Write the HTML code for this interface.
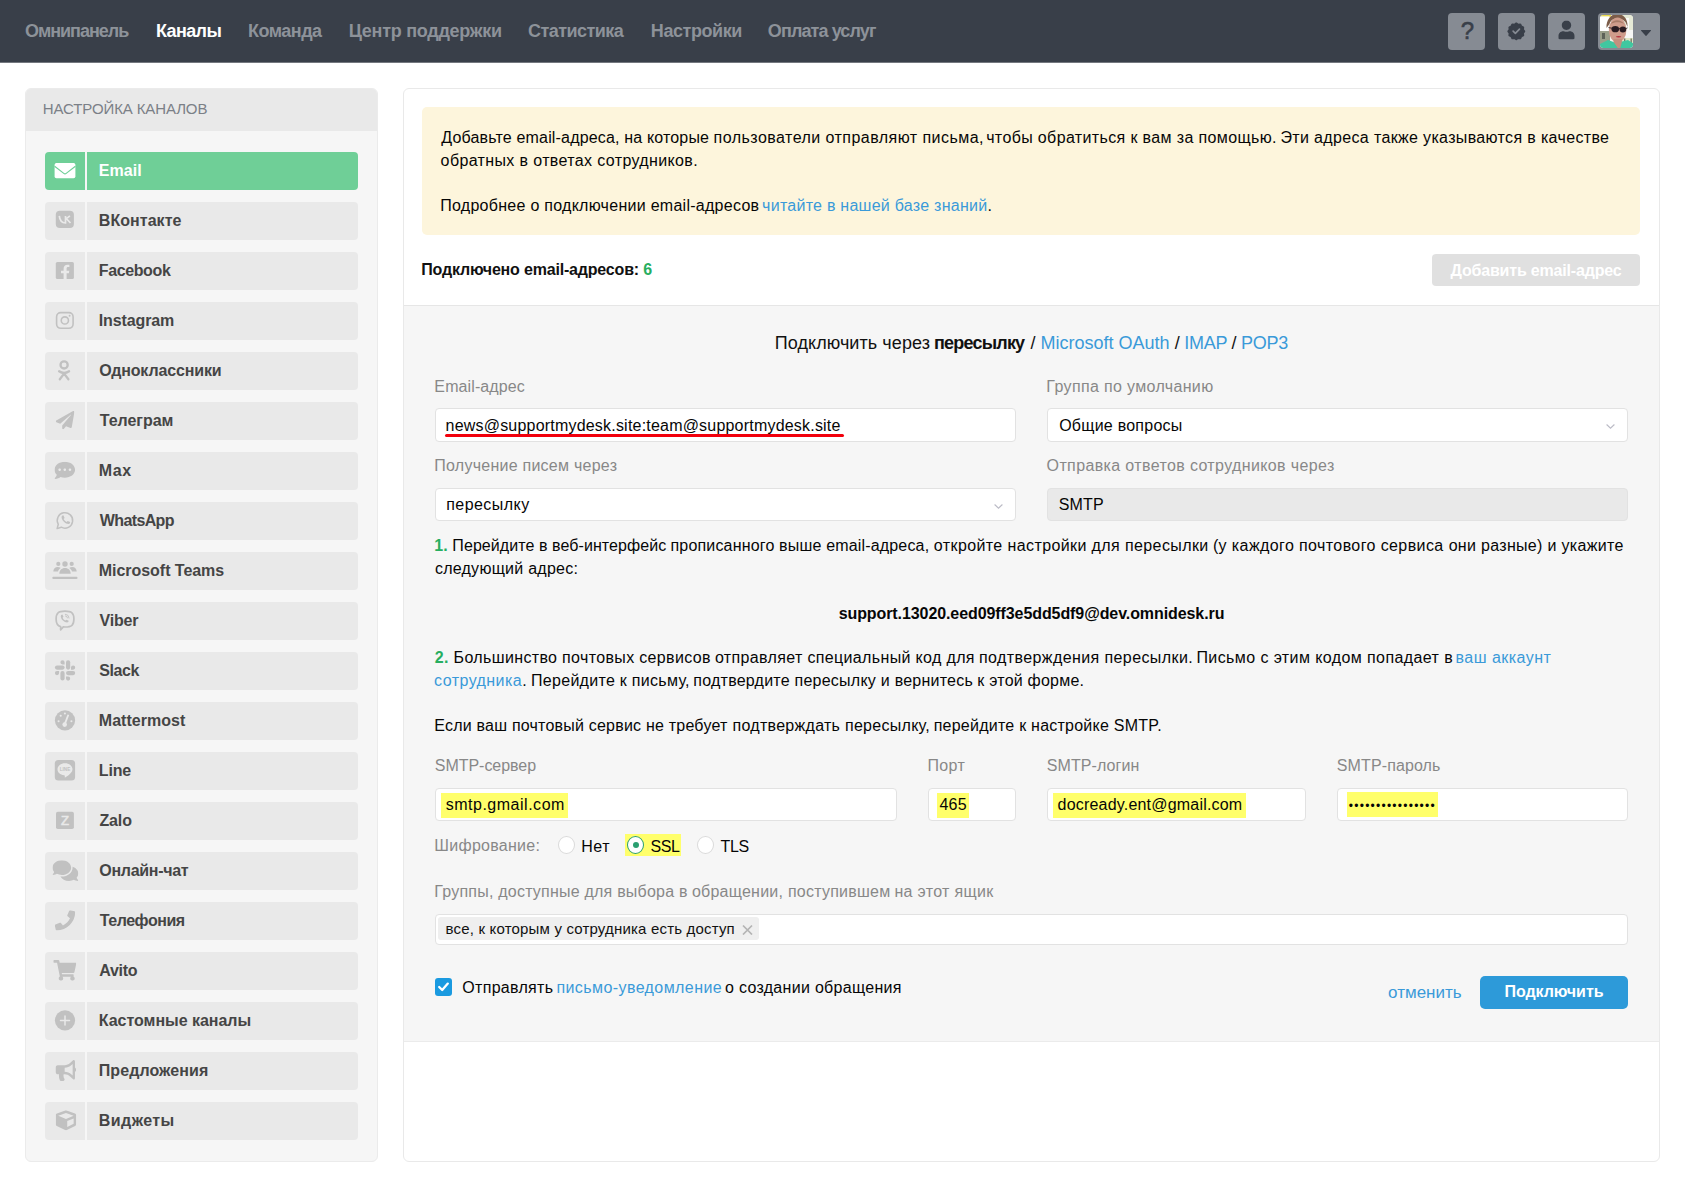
<!DOCTYPE html>
<html lang="ru">
<head>
<meta charset="utf-8">
<title>Каналы — Email</title>
<style>
*{box-sizing:border-box;margin:0;padding:0}
html,body{width:1685px;height:1187px;overflow:hidden;background:#fff}
body{font-family:"Liberation Sans",sans-serif;font-size:16px;color:#060606;position:relative;letter-spacing:-0.3px}
a{color:#3a9ad9;text-decoration:none}
ul{list-style:none}
.abs{position:absolute;white-space:nowrap}

/* ---------- top bar ---------- */
#top{position:absolute;left:0;top:0;width:1685px;height:62px;background:#393f49;box-shadow:0 1px 0 rgba(57,63,73,.7)}
#top nav a{position:absolute;top:20px;font-size:18px;line-height:22px;font-weight:bold;color:#8d9299;white-space:nowrap}
#top nav a.on{color:#fff}
.tb{position:absolute;top:13px;width:37px;height:37px;border-radius:4px;background:#868b93}
.tb svg{position:absolute}
.qm{position:absolute;left:1px;top:0;width:37px;text-align:center;font-size:24px;line-height:36px;color:#393f49;letter-spacing:0;-webkit-text-stroke:.55px #393f49}

/* ---------- sidebar ---------- */
#side{position:absolute;left:25px;top:88px;width:353px;height:1074px;background:#f6f6f6;border:1px solid #ebebeb;border-radius:6px;overflow:hidden}
#side h2{position:absolute;left:-1px;top:-1px;width:353px;height:43px;background:#e9e9e9;font-size:15px;font-weight:normal;color:#7b8087;line-height:41px;padding-left:19px;letter-spacing:-0.35px}
.ch{position:absolute;left:19px;width:313px;height:38px}
.ch .ic{position:absolute;left:0;top:0;width:40px;height:38px;background:#e9e9e9;border-radius:4px 0 0 4px}
.ch .nm{position:absolute;left:42px;top:0;width:271px;height:38px;background:#e9e9e9;border-radius:0 4px 4px 0;font-weight:bold;font-size:16px;line-height:37px;padding-left:13px;color:#454545;letter-spacing:-0.45px;white-space:nowrap}
.ch.active .ic,.ch.active .nm{background:#6fcf97;color:#fff}
.ch .ic svg{position:absolute;left:0;top:0}

/* ---------- main ---------- */
#main{position:absolute;left:403px;top:88px;width:1257px;height:1074px;background:#fff;border:1px solid #e9e9e9;border-radius:6px;overflow:hidden}
#main>*{position:absolute}
#note{left:18px;top:18px;width:1218px;height:128px;background:#fdf5dc;border-radius:5px}
#note p{position:absolute;left:19px;font-size:16px;line-height:23px;white-space:nowrap;color:#060606}
#cnt{left:18px;top:170px;font-size:16px;font-weight:bold;line-height:22px;color:#111;white-space:nowrap;letter-spacing:-0.45px}
#cnt b{color:#27ae60}
#add{left:1028px;top:165px;width:208px;height:32px;border-radius:4px;background:#e0e0e0;color:#fff;font-weight:bold;font-size:16px;line-height:34px;text-align:center}
#form{left:0;top:216px;width:1255px;height:737px;background:#f6f6f6;border-top:1px solid #e6e6e6;border-bottom:1px solid #ebebeb}
#form>*{position:absolute;white-space:nowrap;margin-top:-1px}
.ttl{left:0;width:1255px;top:26px;text-align:center;font-size:18px;line-height:24px;color:#111;letter-spacing:-0.5px}
.lb{font-size:16px;line-height:22px;color:#888;margin-top:0!important}
.in{height:33px;background:#fff;border:1px solid #e2e2e2;border-radius:4px;font-size:16px;line-height:32px;padding-left:11px;color:#060606;overflow:hidden}
.in.dis{background:#e9e9e9;border-color:#e2e2e2}
.hl{background:#ffff6b}
.p{font-size:16px;line-height:23px;color:#060606}
.g{color:#27ae60;font-weight:bold}
.chev{position:absolute;right:12.500px;top:14.500px}

.ctr{text-align:center}
.err{position:relative;display:inline-block}
.err:after{content:"";position:absolute;left:-1px;right:-3px;top:25px;height:3px;border-radius:2px;background:#f2000c}
.in .hl{position:absolute;top:4px;height:25px}
.in span{position:relative}
.rd{position:absolute;width:17px;height:18px;margin-top:-2px!important;border-radius:50%;background:#fff;border:1px solid #dadada}
.rd.on{border-color:#2a9f70}
.rd.on:after{content:"";position:absolute;left:4.5px;top:5px;width:6px;height:6px;border-radius:50%;background:#2a9f70}
.rl{font-size:16px;line-height:22px;color:#060606;margin-top:0!important}
.tags{padding-left:2px}
.tag{position:absolute!important;left:2px;top:2px;height:23px;width:321px;background:#efefef;border-radius:3px;font-size:15px;line-height:24px;padding-left:8px;color:#111}
.tag svg{position:absolute;right:6.500px;top:7px}
.cb{position:absolute;width:17px;height:18px;border-radius:3px;background:#1a9ae0}
.cb svg{position:absolute;left:0;top:0}
#go{left:1076px;top:671px;width:148px;height:33px;border-radius:5px;background:#2d9ad9;color:#fff;font-weight:bold;font-size:16px;line-height:32px;text-align:center}
.pw{font-size:12px;letter-spacing:0}
</style>
<style>
#n0{letter-spacing:-1.036px;margin-left:-0.01px}
#n1{letter-spacing:-0.599px;margin-left:-0.14px}
#n2{letter-spacing:-0.484px;margin-left:-0.14px}
#n3{letter-spacing:-0.269px;margin-left:-0.27px}
#n4{letter-spacing:-0.560px;margin-left:0.07px}
#n5{letter-spacing:-0.423px;margin-left:-0.18px}
#n6{letter-spacing:-0.899px;margin-left:-0.16px}
#sh{letter-spacing:-0.116px;margin-left:-1.19px}
#nt2{letter-spacing:0.369px;margin-left:-0.40px}
#cnt{letter-spacing:-0.185px;margin-left:-0.74px}
#addtx{letter-spacing:-0.179px}
#l1{letter-spacing:0.110px;margin-left:-0.65px}
#l2{letter-spacing:0.348px;margin-left:-0.65px}
#l3{letter-spacing:0.253px;margin-left:-0.76px}
#l4{letter-spacing:0.372px;margin-left:-0.41px}
#v1{letter-spacing:0.203px;margin-left:-1.48px}
#v2{letter-spacing:0.246px;margin-left:0.14px}
#v3{letter-spacing:0.442px;margin-left:-0.77px}
#v4{letter-spacing:0.183px;margin-left:-0.31px}
#p2{letter-spacing:0.257px;margin-left:-0.13px}
#p3{letter-spacing:-0.086px}
#l5{letter-spacing:-0.042px;margin-left:-0.20px}
#l6{letter-spacing:0.402px;margin-left:-0.62px}
#l7{letter-spacing:0.075px;margin-left:-0.20px}
#l8{letter-spacing:0.104px;margin-left:-0.17px}
#v5{letter-spacing:0.516px;margin-left:-1.37px}
#v6{letter-spacing:0.232px;margin-left:-0.57px}
#v7{letter-spacing:0.196px;margin-left:-1.44px}
#v8{letter-spacing:1.242px;margin-left:-0.18px}
#l9{letter-spacing:0.265px;margin-left:-0.65px}
#r1{letter-spacing:0.537px;margin-left:0.29px}
#r2{letter-spacing:-0.355px;margin-left:0.40px}
#r3{letter-spacing:-0.355px;margin-left:0.51px}
#tg{letter-spacing:0.182px;margin-left:-0.46px}
#cancel{letter-spacing:0.017px;margin-left:0.05px}
#gotx{letter-spacing:-0.040px}
#nt1a{letter-spacing:0.166px;margin-left:0.35px}
#nt1b{letter-spacing:0.456px;margin-left:-0.20px}
#nt1c{letter-spacing:0.365px;margin-left:-2.66px}
#nt1d{letter-spacing:0.347px;margin-left:-1.17px}
#nt3a{letter-spacing:0.272px;margin-left:-0.77px}
#nt3b{letter-spacing:0.257px;margin-left:-1.96px}
#ttla{letter-spacing:0.081px;margin-left:-0.24px}
#ttlb{letter-spacing:-0.781px;margin-left:-1.28px}
#ttlc{letter-spacing:-0.009px;margin-left:1.75px}
#ttld{letter-spacing:-0.254px;margin-left:0.15px}
#p1a{letter-spacing:0.073px;margin-left:-0.68px}
#p1b{letter-spacing:0.170px;margin-left:-0.28px}
#p1c{letter-spacing:0.393px;margin-left:-0.06px}
#p1d{letter-spacing:0.397px;margin-left:-0.59px}
#p1e{letter-spacing:0.311px;margin-left:0.24px}
#p4a{letter-spacing:0.347px;margin-left:-0.23px}
#p4b{letter-spacing:0.351px;margin-left:-0.71px}
#p4c{letter-spacing:0.407px;margin-left:-0.73px}
#p4d{letter-spacing:0.404px;margin-left:-1.56px}
#p4e{letter-spacing:0.468px;margin-left:-2.34px}
#p5a{letter-spacing:0.442px;margin-left:-0.92px}
#p5b{letter-spacing:0.288px;margin-left:-0.89px}
#p5c{letter-spacing:0.239px;margin-left:-1.26px}
#p5d{letter-spacing:0.217px;margin-left:-0.40px}
#p6a{letter-spacing:0.212px;margin-left:-0.71px}
#p6b{letter-spacing:0.285px;margin-left:0.37px}
#p6c{letter-spacing:0.241px;margin-left:-1.12px}
#l10a{letter-spacing:0.214px;margin-left:-0.65px}
#l10b{letter-spacing:0.238px;margin-left:-0.40px}
#l10c{letter-spacing:0.320px;margin-left:-0.65px}
#cka{letter-spacing:0.298px;margin-left:0.31px}
#ckb{letter-spacing:0.421px;margin-left:-1.70px}
#ckc{letter-spacing:0.295px;margin-left:-1.25px}
#c0{letter-spacing:0.068px;margin-left:-1.27px}
#c1{letter-spacing:0.052px;margin-left:-1.23px}
#c2{letter-spacing:-0.383px;margin-left:-1.23px}
#c3{letter-spacing:-0.115px;margin-left:-1.23px}
#c4{letter-spacing:-0.139px;margin-left:-0.78px}
#c5{letter-spacing:-0.025px;margin-left:-0.28px}
#c6{letter-spacing:0.605px;margin-left:-1.23px}
#c7{letter-spacing:-0.626px;margin-left:-0.23px}
#c8{letter-spacing:-0.039px;margin-left:-1.23px}
#c9{letter-spacing:-0.220px;margin-left:-0.40px}
#c10{letter-spacing:-0.389px;margin-left:-0.74px}
#c11{letter-spacing:0.034px;margin-left:-1.23px}
#c12{letter-spacing:-0.145px;margin-left:-1.23px}
#c13{letter-spacing:-0.126px;margin-left:-0.57px}
#c14{letter-spacing:-0.286px;margin-left:-0.78px}
#c15{letter-spacing:-0.468px;margin-left:-0.28px}
#c16{letter-spacing:-0.330px;margin-left:-0.66px}
#c17{letter-spacing:-0.025px;margin-left:-1.23px}
#c18{letter-spacing:0.082px;margin-left:-1.23px}
#c19{letter-spacing:0.434px;margin-left:-1.23px}
</style>
</head>
<body>

<header id="top">
  <nav>
    <a id="n0" style="left:25px">Омнипанель</a>
    <a id="n1" class="on" style="left:156px">Каналы</a>
    <a id="n2" style="left:248px">Команда</a>
    <a id="n3" style="left:349px">Центр поддержки</a>
    <a id="n4" style="left:528px">Статистика</a>
    <a id="n5" style="left:651px">Настройки</a>
    <a id="n6" style="left:768px">Оплата услуг</a>
  </nav>
  <div class="tb" style="left:1448px"><span class="qm">?</span></div>
  <div class="tb" style="left:1498px"><svg width="37" height="37" viewBox="0 0 37 37" style="left:0;top:0"><g transform="translate(18.300 18) scale(.86) translate(-18.500 -18.500)"><path fill="#393f49" d="M18.500 9.700l2.100 1.500 2.500-.3 1.100 2.300 2.300 1.100-.3 2.500 1.500 2.100-1.500 2.100.3 2.500-2.300 1.100-1.100 2.300-2.500-.3-2.100 1.500-2.100-1.500-2.500.3-1.100-2.300-2.300-1.100.3-2.500-1.500-2.100 1.500-2.100-.3-2.500 2.300-1.100 1.100-2.300 2.500.3z" stroke="#393f49" stroke-width="2.400" stroke-linejoin="round"/><path d="M14.800 18.700l2.600 2.600 4.800-5" fill="none" stroke="#868b93" stroke-width="1.900" stroke-linecap="round" stroke-linejoin="round"/></g></svg></div>
  <div class="tb" style="left:1548px"><svg width="37" height="37" viewBox="0 0 37 37" style="left:0;top:0"><svg x="10.3" y="7.6" width="16.4" height="18.8" viewBox="0 0 448 512" preserveAspectRatio="none"><path fill="#393f49" d="M224 256c70.700 0 128-57.300 128-128S294.700 0 224 0 96 57.300 96 128s57.300 128 128 128zm89.600 32h-16.700c-22.200 10.200-46.900 16-72.900 16s-50.600-5.800-72.900-16h-16.700C60.200 288 0 348.200 0 422.400V464c0 26.500 21.500 48 48 48h352c26.500 0 48-21.500 48-48v-41.600c0-74.200-60.200-134.400-134.400-134.400z"/></svg></svg></div>
  <div class="tb" style="left:1598px;width:62px"><svg width="33" height="33" viewBox="0 0 33 33" style="left:2px;top:2px;border-radius:3px"><defs><filter id="bl" x="-10%" y="-10%" width="120%" height="120%"><feGaussianBlur stdDeviation=".55"/></filter><clipPath id="ac"><rect width="33" height="33" rx="3"/></clipPath></defs><g clip-path="url(#ac)"><rect width="33" height="33" fill="#f3f4ee"/><g filter="url(#bl)"><rect x="-1" y="-1" width="12" height="2.600" fill="#e9d84a"/><rect x="-1" y="1.500" width="10" height="15" fill="#ffffff"/><rect x="-1" y="16" width="11" height="15" fill="#9a9f8a"/><rect x="2" y="18" width="3" height="6" fill="#5d6258"/><rect x="22" y="0" width="12" height="16" fill="#e6ead6"/><rect x="26" y="3" width="3" height="12" fill="#fbfbf8"/><rect x="22" y="15" width="12" height="9" fill="#f7f7f5"/><rect x="22" y="23" width="12" height="7" fill="#dfe6c4"/><rect x="24.200" y="23.500" width="1.100" height="6" fill="#5a5a50"/><rect x="30.600" y="23.500" width="1.100" height="7" fill="#5a5a50"/><path d="M6.500 13C6 5 11 -1 17 -1s11 4 10.500 13l-2-5C23 4 20 3.500 17 3.500S10.500 5 9.500 9z" fill="#7b5c49"/><ellipse cx="17.600" cy="15" rx="8.800" ry="12.500" fill="#cf9c8b"/><path d="M11 9c2-5 10-5 13 0-3-2.500-10-2.500-13 0z" fill="#a87c68"/><rect x="13.500" y="24" width="8.500" height="10" fill="#c38f7e"/><ellipse cx="15.300" cy="14.200" rx="3.800" ry="3.100" fill="#2a1f23"/><ellipse cx="22.900" cy="14.500" rx="3.300" ry="2.900" fill="#2a1f23"/><path d="M8.500 12.600l4 .7M18.800 13.400h1.200M26 13.500l1.500-.6" stroke="#2a1f23" stroke-width=".9" fill="none"/><ellipse cx="18.600" cy="21.700" rx="2.700" ry=".8" fill="#b5343f"/><path d="M-1 29.500l9-4.500 5.500 2 5 7H-1zM20 34l2-7.500 6-1.500 6 4v5z" fill="#3fc7a0"/></g></g></svg><svg width="10" height="6" viewBox="0 0 10 6" style="left:43px;top:17px"><path d="M.4 0h9.200a.4.400 0 0 1 .3.700L5.400 5.800a.6.600 0 0 1-.8 0L.1.700A.4.400 0 0 1 .4 0z" fill="#393f49"/></svg></div>
</header>

<aside id="side">
  <h2><span id="sh">НАСТРОЙКА КАНАЛОВ</span></h2>
  <ul>
<li class="ch active" style="top:63px"><span class="ic"><svg width="40" height="38" viewBox="0 0 40 38" style="left:0;top:0;transform:none"><rect x="9.600" y="11" width="20.800" height="15.200" rx="1.800" fill="#fff"/><path d="M9.600 14.300l9.200 7.100a2 2 0 0 0 2.400 0l9.200-7.100" fill="none" stroke="#6fcf97" stroke-width="1.150"/></svg></span><span class="nm"><span id="c0">Email</span></span></li>
<li class="ch" style="top:113px"><span class="ic"><svg width="40" height="38" viewBox="0 0 40 38" style="left:0;top:0;transform:none"><rect x="10.8" y="8.7" width="18.1" height="17.3" rx="4" fill="#c1c1c1"/><path d="M14.3 13.9c.4 4.300 2.400 7 6.200 7.100V13.900M20.500 17.300l4.400-3.400M21.700 17l3.800 4" fill="none" stroke="#e9e9e9" stroke-width="1.700"/></svg></span><span class="nm"><span id="c1">ВКонтакте</span></span></li>
<li class="ch" style="top:163px"><span class="ic"><svg width="40" height="38" viewBox="0 0 40 38" style="left:0;top:0;transform:none"><rect x="10.800" y="10" width="18.100" height="17" rx="1.600" fill="#c1c1c1"/><path fill="#e9e9e9" d="M18.600 27V21.300H16V18.700H18.600V16.700C18.600 14.100 20.100 12.700 22.500 12.700C23.400 12.700 24.400 12.850 24.400 12.850V15.100H23.200C22 15.100 21.600 15.800 21.600 16.600V18.700H24.300L23.900 21.300H21.600V27Z"/></svg></span><span class="nm"><span id="c2">Facebook</span></span></li>
<li class="ch" style="top:213px"><span class="ic"><svg width="40" height="38" viewBox="0 0 40 38" style="left:0;top:0;transform:none"><rect x="11.600" y="10.600" width="16.500" height="15.700" rx="4.200" fill="none" stroke="#c1c1c1" stroke-width="1.600"/><circle cx="19.850" cy="18.450" r="3.600" fill="none" stroke="#c1c1c1" stroke-width="1.600"/><circle cx="24.600" cy="13.800" r=".95" fill="#c1c1c1"/></svg></span><span class="nm"><span id="c3">Instagram</span></span></li>
<li class="ch" style="top:263px"><span class="ic"><svg width="40" height="38" viewBox="0 0 40 38" style="left:0;top:0;transform:none"><g fill="none" stroke="#c1c1c1" stroke-width="2.300" stroke-linecap="round"><circle cx="19.100" cy="12.900" r="3.600"/><path d="M14.100 19.300q5 3.400 10 0M19.100 21.600l-4.300 5.700M19.100 21.600l4.300 5.700"/></g></svg></span><span class="nm"><span id="c4">Одноклассники</span></span></li>
<li class="ch" style="top:313px"><span class="ic"><svg width="40" height="38" viewBox="0 0 40 38" style="left:0;top:0;transform:none"><svg x="10.8" y="9" width="18.6" height="18.2" viewBox="0 0 512 512" preserveAspectRatio="none"><path fill="#c1c1c1" d="M476 3.2L12.5 270.6c-18.1 10.4-15.8 35.600 2.200 43.200L121 358.400l287.300-253.200c5.500-4.900 13.300 2.600 8.600 8.300L176 407v80.500c0 23.600 28.500 32.900 42.500 15.800L282 426l124.600 52.200c14.200 6 30.400-2.900 33-18.200l72-432C515 7.800 493.300-6.800 476 3.200z"/></svg></svg></span><span class="nm"><span id="c5">Телеграм</span></span></li>
<li class="ch" style="top:363px"><span class="ic"><svg width="40" height="38" viewBox="0 0 40 38" style="left:0;top:0;transform:none"><svg x="9.5" y="9.8" width="20.6" height="17.2" viewBox="0 32 512 448" preserveAspectRatio="none"><path fill="#c1c1c1" d="M256 32C114.600 32 0 125.100 0 240c0 49.600 21.400 95 57 130.700C44.500 421.100 2.700 466 2.200 466.500c-2.200 2.300-2.800 5.700-1.500 8.700S4.800 480 8 480c66.300 0 116-31.800 140.600-51.400 32.700 12.300 69 19.400 107.400 19.400 141.400 0 256-93.100 256-208S397.400 32 256 32zM128 272c-17.700 0-32-14.300-32-32s14.300-32 32-32 32 14.300 32 32-14.300 32-32 32zm128 0c-17.700 0-32-14.300-32-32s14.300-32 32-32 32 14.300 32 32-14.300 32-32 32zm128 0c-17.700 0-32-14.300-32-32s14.300-32 32-32 32 14.300 32 32-14.300 32-32 32z"/></svg></svg></span><span class="nm"><span id="c6">Max</span></span></li>
<li class="ch" style="top:413px"><span class="ic"><svg width="40" height="38" viewBox="0 0 40 38" style="left:0;top:0;transform:none"><path d="M12.100 26.600l1.200-4.300a7.700 7.700 0 1 1 3 2.900z" fill="none" stroke="#c1c1c1" stroke-width="1.500" stroke-linejoin="round"/><path d="M17 13.700l1.400-.4 1.200 2.600-1 1.100c.6 1.300 1.600 2.300 3 3l1.100-1.100 2.500 1.200-.4 1.500c-1.200 1-3.900.2-5.900-1.800s-3-4.700-1.900-6.100z" fill="#c1c1c1"/></svg></span><span class="nm"><span id="c7">WhatsApp</span></span></li>
<li class="ch" style="top:463px"><span class="ic"><svg width="40" height="38" viewBox="0 0 40 38" style="left:0;top:0;transform:none"><g fill="#c1c1c1"><circle cx="20" cy="12" r="2.700"/><circle cx="13.300" cy="11.900" r="2.100"/><circle cx="26.700" cy="11.900" r="2.100"/><path d="M14.300 21.800c0-3.400 2.300-5.700 5.700-5.700s5.700 2.300 5.700 5.700z"/><path d="M8.300 19.600c0-2.900 1.900-4.600 4.400-4.600 1.200 0 2.200.4 3 1.100-1.500 1-2.400 2.300-2.700 3.500zM31.700 19.600c0-2.900-1.900-4.600-4.400-4.600-1.200 0-2.200.4-3 1.100 1.500 1 2.400 2.300 2.700 3.500z"/><rect x="7.300" y="24.800" width="25.200" height="2.100" rx="1"/></g></svg></span><span class="nm"><span id="c8">Microsoft Teams</span></span></li>
<li class="ch" style="top:513px"><span class="ic"><svg width="40" height="38" viewBox="0 0 40 38" style="left:0;top:0;transform:none"><path d="M15.600 24.600c-3.300-.7-4.500-2.600-4.500-7.500 0-6 2.200-8 8.900-8s8.900 2 8.900 8-2.200 7.900-8.900 7.900c-.6 0-1.200 0-1.700-.1l-2.700 2.900z" fill="none" stroke="#c1c1c1" stroke-width="1.700" stroke-linejoin="round"/><path d="M16.100 12.900l1.300-.4 1.100 2.300-.9 1c.5 1.200 1.500 2.200 2.800 2.800l1-.9 2.300 1.100-.4 1.300c-1.100.9-3.600.2-5.400-1.600s-2.700-4.300-1.800-5.600z" fill="#c1c1c1"/><path d="M20.300 12.200a4 4 0 0 1 3.800 3.800M20.500 13.900a2.200 2.200 0 0 1 2 2" fill="none" stroke="#c1c1c1" stroke-width=".9" stroke-linecap="round"/></svg></span><span class="nm"><span id="c9">Viber</span></span></li>
<li class="ch" style="top:563px"><span class="ic"><svg width="40" height="38" viewBox="0 0 40 38" style="left:0;top:0;transform:none"><g fill="#c1c1c1"><rect x="21" y="8.200" width="4.200" height="9.500" rx="2.100"/><rect x="15.400" y="19" width="4.200" height="9.600" rx="2.100"/><rect x="9.900" y="13.500" width="9.700" height="4.200" rx="2.100"/><rect x="21" y="19" width="9.200" height="4.200" rx="2.100"/><path d="M19.600 12.400h-2.100a2.100 2.100 0 1 1 2.100-2.100zM26 17.700v-2.100a2.100 2.100 0 1 1 2.100 2.100zM21 24.500h2.100a2.100 2.100 0 1 1-2.100 2.100zM14.100 19v2.100a2.100 2.100 0 1 1-2.100-2.100z"/></g></svg></span><span class="nm"><span id="c10">Slack</span></span></li>
<li class="ch" style="top:613px"><span class="ic"><svg width="40" height="38" viewBox="0 0 40 38" style="left:0;top:0;transform:none"><circle cx="20" cy="18.400" r="10.100" fill="#c1c1c1"/><g fill="#e9e9e9"><circle cx="19.700" cy="22.600" r="2.300"/><path d="M18.900 21.800l3.600-9.400 1.700.7-3.600 9.400z"/><circle cx="13.600" cy="19.200" r="1.050"/><circle cx="15.700" cy="13.800" r="1.050"/><circle cx="19.900" cy="11.500" r="1.050"/><circle cx="26.400" cy="19.200" r="1.050"/></g></svg></span><span class="nm"><span id="c11">Mattermost</span></span></li>
<li class="ch" style="top:663px"><span class="ic"><svg width="40" height="38" viewBox="0 0 40 38" style="left:0;top:0;transform:none"><rect x="9.800" y="8" width="20.300" height="20.600" rx="3.600" fill="#c1c1c1"/><path d="M20 11.200c4.200 0 7.500 2.700 7.500 6 0 2.600-2.300 5-7 8.100-.7.500-.9.100-.7-.7.200-.9.100-1.300-.7-1.400-3.900-.5-6.600-2.900-6.600-6 0-3.300 3.300-6 7.500-6z" fill="#e9e9e9"/><text x="20" y="19.100" font-family="Liberation Sans, sans-serif" font-size="4.600" font-weight="bold" text-anchor="middle" fill="#c1c1c1" letter-spacing="0">LINE</text></svg></span><span class="nm"><span id="c12">Line</span></span></li>
<li class="ch" style="top:713px"><span class="ic"><svg width="40" height="38" viewBox="0 0 40 38" style="left:0;top:0;transform:none"><rect x="11" y="9.700" width="17.900" height="17.300" rx="1.800" fill="#c1c1c1"/><text x="20.100" y="23.200" font-family="Liberation Sans, sans-serif" font-size="13.200" text-anchor="middle" fill="#e9e9e9" stroke="#e9e9e9" stroke-width=".5" letter-spacing="0">Z</text></svg></span><span class="nm"><span id="c13">Zalo</span></span></li>
<li class="ch" style="top:763px"><span class="ic"><svg width="40" height="38" viewBox="0 0 40 38" style="left:0;top:0;transform:none"><svg x="7.5" y="8.3" width="25.8" height="20.6" viewBox="0 32 576 448" preserveAspectRatio="none"><path fill="#c1c1c1" d="M416 192c0-88.400-93.100-160-208-160S0 103.600 0 192c0 34.300 14.100 65.900 38 92-13.400 30.200-35.500 54.200-35.800 54.500-2.200 2.300-2.800 5.700-1.500 8.700S4.800 352 8 352c36.600 0 66.900-12.300 88.700-25 32.200 15.700 70.300 25 111.300 25 114.900 0 208-71.600 208-160zm122 220c23.900-26 38-57.700 38-92 0-66.900-53.500-124.200-129.300-148.100.9 6.600 1.300 13.300 1.300 20.100 0 105.900-107.700 192-240 192-10.800 0-21.300-.8-31.700-1.900C207.800 439.600 281.800 480 368 480c41 0 79.100-9.200 111.300-25 21.800 12.700 52.100 25 88.700 25 3.200 0 6.100-1.900 7.300-4.800 1.300-2.900.7-6.300-1.500-8.700-.3-.3-22.400-24.200-35.800-54.500z"/></svg></svg></span><span class="nm"><span id="c14">Онлайн-чат</span></span></li>
<li class="ch" style="top:813px"><span class="ic"><svg width="40" height="38" viewBox="0 0 40 38" style="left:0;top:0;transform:none"><svg x="9.8" y="8.2" width="20.4" height="20.4" viewBox="0 0 512 512" preserveAspectRatio="none"><path fill="#c1c1c1" d="M493.4 24.6l-104-24c-11.3-2.600-22.900 3.300-27.500 13.900l-48 112c-4.200 9.800-1.400 21.300 6.900 28l60.600 49.600c-36 76.700-98.900 140.500-177.200 177.200l-49.600-60.600c-6.800-8.300-18.200-11.100-28-6.900l-112 48C3.900 366.500-2 378.100.6 389.400l24 104C27.100 504.200 36.700 512 48 512c256.100 0 464-207.500 464-464 0-11.200-7.700-20.900-18.600-23.400z"/></svg></svg></span><span class="nm"><span id="c15">Телефония</span></span></li>
<li class="ch" style="top:863px"><span class="ic"><svg width="40" height="38" viewBox="0 0 40 38" style="left:0;top:0;transform:none"><svg x="8.3" y="8.1" width="23" height="20.6" viewBox="0 0 576 512" preserveAspectRatio="none"><path fill="#c1c1c1" d="M528.12 301.319l47.273-208C578.806 78.301 567.391 64 551.990 64H159.208l-9.166-44.810C147.758 8.021 137.930 0 126.529 0H24C10.745 0 0 10.745 0 24v16c0 13.255 10.745 24 24 24h69.883l70.248 343.435C147.325 417.100 136 435.222 136 456c0 30.928 25.072 56 56 56s56-25.072 56-56c0-15.674-6.447-29.835-16.824-40h209.647C430.447 426.165 424 440.326 424 456c0 30.928 25.072 56 56 56s56-25.072 56-56c0-22.172-12.888-41.332-31.579-50.405l5.517-24.276c3.413-15.018-8.002-29.319-23.403-29.319H218.117l-6.545-32h293.145c11.206 0 20.920-7.754 23.403-18.681z"/></svg></svg></span><span class="nm"><span id="c16">Avito</span></span></li>
<li class="ch" style="top:913px"><span class="ic"><svg width="40" height="38" viewBox="0 0 40 38" style="left:0;top:0;transform:none"><circle cx="20" cy="18.400" r="10.100" fill="#c1c1c1"/><path d="M20 13.900v9M15.500 18.400h9" stroke="#e9e9e9" stroke-width="1.500" stroke-linecap="round"/></svg></span><span class="nm"><span id="c17">Кастомные каналы</span></span></li>
<li class="ch" style="top:963px"><span class="ic"><svg width="40" height="38" viewBox="0 0 40 38" style="left:0;top:0;transform:none"><svg x="10.5" y="8" width="20.6" height="20.9" viewBox="0 0 576 512" preserveAspectRatio="none"><path fill="#c1c1c1" d="M576 240c0-23.630-12.950-44.040-32-55.120V32.010C544 23.260 537.020 0 512 0c-7.120 0-14.190 2.380-19.980 7.020l-85.030 68.030C364.280 109.190 310.660 128 256 128H64c-35.350 0-64 28.650-64 64v96c0 35.350 28.650 64 64 64h33.700c-1.390 10.480-2.180 21.140-2.180 32 0 39.770 9.260 77.350 25.560 110.940 5.190 10.690 16.520 17.060 28.400 17.060h74.280c26.050 0 41.690-29.840 25.900-50.560-16.400-21.520-26.150-48.360-26.150-77.440 0-11.110 1.620-21.790 4.410-32H256c54.660 0 108.280 18.810 150.980 52.950l85.030 68.030a32.023 32.023 0 0 0 19.980 7.020c24.920 0 32-22.780 32-32V295.130C563.050 284.040 576 263.630 576 240zm-96 141.420l-33.050-26.440C392.950 311.780 325.120 288 256 288v-96c69.120 0 136.950-23.780 190.950-66.980L480 98.580v282.840z"/></svg></svg></span><span class="nm"><span id="c18">Предложения</span></span></li>
<li class="ch" style="top:1013px"><span class="ic"><svg width="40" height="38" viewBox="0 0 40 38" style="left:0;top:0;transform:none"><svg x="10.7" y="8.2" width="20.5" height="20.3" viewBox="0 0 512 512" preserveAspectRatio="none"><path fill="#c1c1c1" d="M239.100 6.300l-208 78c-18.700 7-31.100 25-31.100 45v225.100c0 18.200 10.300 34.800 26.500 42.900l208 104c13.500 6.800 29.400 6.800 42.900 0l208-104c16.300-8.100 26.500-24.800 26.500-42.900V129.300c0-20-12.400-37.900-31.100-44.900l-208-78C262 2.200 250 2.200 239.100 6.300zM256 68.400l192 72v1.100l-192 78-192-78v-1.100l192-72zm32 356V275.500l160-65v133.900l-160 80z"/></svg></svg></span><span class="nm"><span id="c19">Виджеты</span></span></li>
  </ul>
</aside>

<main id="main">
  <div id="note">
    <p style="top:19px"><span id="nt1a">Добавьте email-адреса, на которые </span><span id="nt1b">пользователи отправляют письма, </span><span id="nt1c">чтобы обратиться к вам за помощью. </span><span id="nt1d">Эти адреса также указываются в качестве</span></p>
    <p id="nt2" style="top:42px">обратных в ответах сотрудников.</p>
    <p style="top:87px"><span id="nt3a">Подробнее о подключении email-адресов </span><span id="nt3b"><a>читайте в нашей базе знаний</a>.</span></p>
  </div>
  <div id="cnt">Подключено email-адресов: <b>6</b></div>
  <div id="add"><span id="addtx">Добавить email-адрес</span></div>

  <section id="form">
    <div class="ttl"><span id="ttla">Подключить через </span><b id="ttlb">пересылку</b> <span id="ttlc">/ <a>Microsoft OAuth</a> </span><span id="ttld">/ <a>IMAP</a> / <a>POP3</a></span></div>

    <label class="lb" id="l1" style="left:31px;top:70px">Email-адрес</label>
    <div class="in" style="left:31px;top:103px;width:581px;height:34px;line-height:33px"><span id="v1" class="err">news@supportmydesk.site:team@supportmydesk.site</span></div>
    <label class="lb" id="l2" style="left:643px;top:70px">Группа по умолчанию</label>
    <div class="in sel" style="left:643px;top:103px;width:581px;height:34px;line-height:33px"><span id="v2">Общие вопросы</span><svg class="chev" width="9" height="5" viewBox="0 0 9 5"><path d="M.6.500l3.900 3.700 3.900-3.700" fill="none" stroke="#bbbbc6" stroke-width="1.100"/></svg></div>

    <label class="lb" id="l3" style="left:31px;top:149px">Получение писем через</label>
    <div class="in sel" style="left:31px;top:183px;width:581px"><span id="v3">пересылку</span><svg class="chev" width="9" height="5" viewBox="0 0 9 5"><path d="M.6.500l3.900 3.700 3.900-3.700" fill="none" stroke="#bbbbc6" stroke-width="1.100"/></svg></div>
    <label class="lb" id="l4" style="left:643px;top:149px">Отправка ответов сотрудников через</label>
    <div class="in sel dis" style="left:643px;top:183px;width:581px"><span id="v4">SMTP</span></div>

    <p class="p" style="left:31px;top:229px"><span id="p1a"><span class="g">1.</span> Перейдите в веб-интерфейс </span><span id="p1b">прописанного выше email-адреса, </span><span id="p1c">откройте настройки для пересылки </span><span id="p1d">(у каждого почтового сервиса </span><span id="p1e">они разные) и укажите</span></p>
    <p class="p" id="p2" style="left:31px;top:252px">следующий адрес:</p>
    <p class="p ctr" style="left:0;width:1255px;top:297px"><b id="p3">support.13020.eed09ff3e5dd5df9@dev.omnidesk.ru</b></p>
    <p class="p" style="left:31px;top:341px"><span id="p4a"><span class="g">2.</span> Большинство почтовых сервисов </span><span id="p4b">отправляет специальный код для </span><span id="p4c">подтверждения пересылки. </span><span id="p4d">Письмо с этим кодом попадает в </span><a id="p4e">ваш аккаунт</a></p>
    <p class="p" style="left:31px;top:364px"><span id="p5a"><a>сотрудника</a>. </span><span id="p5b">Перейдите к письму, </span><span id="p5c">подтвердите пересылку и вернитесь </span><span id="p5d">к этой форме.</span></p>
    <p class="p" style="left:31px;top:409px"><span id="p6a">Если ваш почтовый сервис не требует </span><span id="p6b">подтверждать пересылку, </span><span id="p6c">перейдите к настройке SMTP.</span></p>

    <label class="lb" id="l5" style="left:31px;top:449px">SMTP-сервер</label>
    <label class="lb" id="l6" style="left:524px;top:449px">Порт</label>
    <label class="lb" id="l7" style="left:643px;top:449px">SMTP-логин</label>
    <label class="lb" id="l8" style="left:933px;top:449px">SMTP-пароль</label>
    <div class="in" style="left:31px;top:483px;width:462px"><mark class="hl" style="left:5px;width:127px"></mark><span id="v5">smtp.gmail.com</span></div>
    <div class="in" style="left:524px;top:483px;width:88px"><mark class="hl" style="left:8px;width:32px"></mark><span id="v6">465</span></div>
    <div class="in" style="left:643px;top:483px;width:259px"><mark class="hl" style="left:5px;width:193px"></mark><span id="v7">docready.ent@gmail.com</span></div>
    <div class="in" style="left:933px;top:483px;width:291px"><mark class="hl" style="left:9px;width:91px;top:3px"></mark><span id="v8" class="pw">••••••••••••••••</span></div>

    <div class="lb" id="l9" style="left:31px;top:529px">Шифрование:</div>
    <mark class="hl" style="left:221px;top:529px;width:56px;height:22px"></mark>
    <i class="rd" style="left:154px;top:532px"></i><span class="rl" id="r1" style="left:177px;top:530px">Нет</span>
    <i class="rd on" style="left:223px;top:532px"></i><span class="rl" id="r2" style="left:246px;top:530px">SSL</span>
    <i class="rd" style="left:293px;top:532px"></i><span class="rl" id="r3" style="left:316px;top:530px">TLS</span>

    <label class="lb" style="left:31px;top:575px"><span id="l10a">Группы, доступные для выбора в </span><span id="l10b">обращении, поступившем </span><span id="l10c">на этот ящик</span></label>
    <div class="in tags" style="left:31px;top:609px;width:1193px;height:31px"><span class="tag"><span id="tg">все, к которым у сотрудника есть доступ</span><svg width="11" height="11" viewBox="0 0 11 11"><path d="M1 1.500l9 9M10 1.500l-9 9" stroke="#b4b4b4" stroke-width="1.700"/></svg></span></div>

    <i class="cb" style="left:31px;top:673px"><svg width="17" height="17" viewBox="0 0 17 17"><path d="M4.200 9l3 3 5.600-6.400" fill="none" stroke="#fff" stroke-width="2.300" stroke-linecap="round" stroke-linejoin="round"/></svg></i>
    <div class="p" style="left:58px;top:671px"><span id="cka">Отправлять </span><a id="ckb">письмо-уведомление</a> <span id="ckc">о создании обращения</span></div>
    <a class="abs" id="cancel" style="left:984px;top:676px;font-size:17px;line-height:24px">отменить</a>
    <div id="go"><span id="gotx">Подключить</span></div>
  </section>
</main>

</body>
</html>
